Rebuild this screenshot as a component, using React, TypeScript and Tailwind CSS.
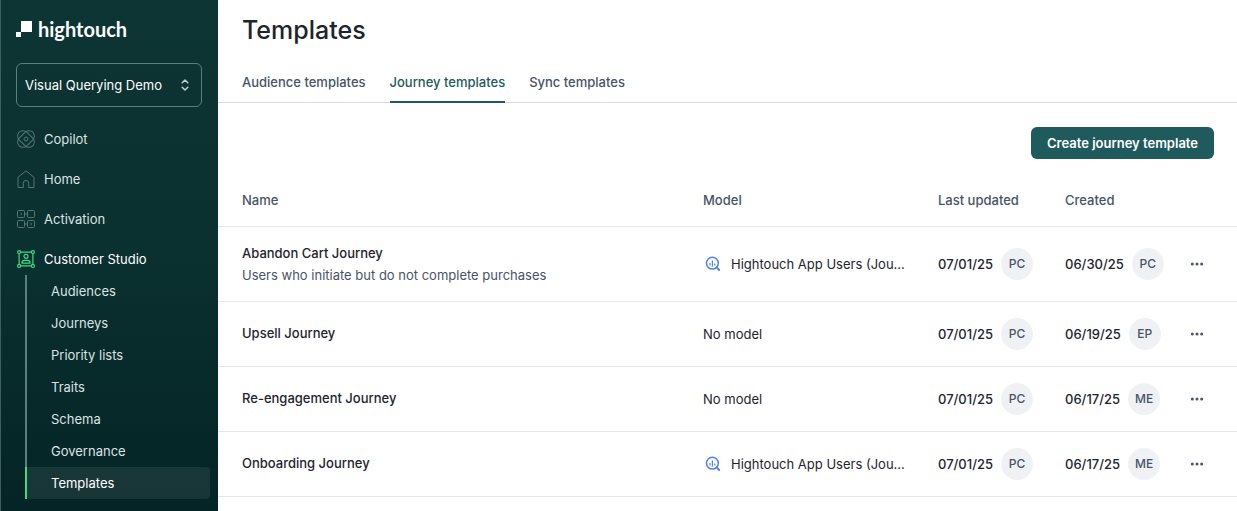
import clsx from "clsx";
import { Ellipsis } from "lucide-react";
import type { ReactNode } from "react";

type Template = {
  name: string;
  description?: string;
  model?: string;
  updated: string;
  updatedBy: string;
  created: string;
  createdBy: string;
};

const templates: Template[] = [
  {
    name: "Abandon Cart Journey",
    description: "Users who initiate but do not complete purchases",
    model: "Hightouch App Users (Jou...",
    updated: "07/01/25",
    updatedBy: "PC",
    created: "06/30/25",
    createdBy: "PC",
  },
  { name: "Upsell Journey", updated: "07/01/25", updatedBy: "PC", created: "06/19/25", createdBy: "EP" },
  { name: "Re-engagement Journey", updated: "07/01/25", updatedBy: "PC", created: "06/17/25", createdBy: "ME" },
  {
    name: "Onboarding Journey",
    model: "Hightouch App Users (Jou...",
    updated: "07/01/25",
    updatedBy: "PC",
    created: "06/17/25",
    createdBy: "ME",
  },
];

const studioLinks = ["Audiences", "Journeys", "Priority lists", "Traits", "Schema", "Governance", "Templates"];

function NavIcon({ children }: { children: ReactNode }) {
  return (
    <svg viewBox="0 0 18 18" className="size-[18px] shrink-0" fill="none" stroke="currentColor" aria-hidden="true">
      {children}
    </svg>
  );
}

function CopilotIcon() {
  return (
    <NavIcon>
      <rect x="-.6" y="3.6" width="19.2" height="10.8" rx="5.4" transform="rotate(45 9 9)" />
      <rect x="-.6" y="3.6" width="19.2" height="10.8" rx="5.4" transform="rotate(-45 9 9)" />
      <circle cx="9" cy="9" r="2" />
    </NavIcon>
  );
}

function HomeIcon() {
  return (
    <NavIcon>
      <path d="M1 7.3 9 .8l8 6.5v10.2h-5.3v-4.3a2.7 2.7 0 0 0-5.4 0v4.3H1z" strokeLinejoin="round" />
    </NavIcon>
  );
}

function ActivationIcon() {
  return (
    <NavIcon>
      <rect x=".5" y=".5" width="7" height="7" rx="1" />
      <rect x="10.5" y=".5" width="7" height="7" rx="1" />
      <rect x=".5" y="10.5" width="7" height="7" rx="1" />
      <rect x="10.5" y="10.5" width="7" height="7" rx="1" />
      <path d="M7.5 4h3M7.5 14h3M3.5 2.8 4.7 4 3.5 5.2M13.5 12.8l1.2 1.2-1.2 1.2" />
    </NavIcon>
  );
}

function StudioIcon() {
  return (
    <NavIcon>
      <path d="M3.6 2.1h10.8M3.6 15.9h10.8M2.1 3.6v10.8M15.9 3.6v10.8" strokeWidth="1.2" />
      <circle cx="2.1" cy="2.1" r="1.5" strokeWidth="1.2" />
      <circle cx="15.9" cy="2.1" r="1.5" strokeWidth="1.2" />
      <circle cx="2.1" cy="15.9" r="1.5" strokeWidth="1.2" />
      <circle cx="15.9" cy="15.9" r="1.5" strokeWidth="1.2" />
      <circle cx="9" cy="6.3" r="2" strokeWidth="1.2" />
      <path d="M5 13.2v-.7c0-1.4 1.2-2.2 2.6-2.2h2.8c1.4 0 2.6.8 2.6 2.2v.7z" strokeWidth="1.2" />
    </NavIcon>
  );
}

function ModelIcon() {
  return (
    <svg viewBox="0 0 16 16" className="size-4 shrink-0 text-[#4f85ec]" fill="none" stroke="currentColor" aria-hidden="true">
      <circle cx="7.4" cy="7.2" r="5.9" strokeWidth="1.5" />
      <path d="m11.6 11.4 2.6 2.6" strokeWidth="2" strokeLinecap="round" />
      <path d="M5 7v2.6M7.4 4.6v5.8M9.8 7.6v2" strokeWidth="1.2" />
    </svg>
  );
}

function NavItem({ icon, label, active = false }: { icon: ReactNode; label: string; active?: boolean }) {
  return (
    <a href="#" className={clsx("flex h-8 items-center gap-[9px]", active ? "text-white" : "text-[#dbe3e3]")}>
      <span className={active ? "text-[#3ddc84]" : "text-[#547776]"}>{icon}</span>
      {label}
    </a>
  );
}

function Sidebar() {
  return (
    <aside className="w-[218px] shrink-0 border-l border-[#3a5f5e] bg-linear-to-b from-[#0d3534] via-[#0a302f] to-[#052425] text-[13px] leading-5">
      <div className="flex h-[63px] items-start gap-1.5 pt-[17px] pl-[15px] text-white">
        <svg viewBox="0 0 16 16" className="mt-1 size-4" fill="currentColor" aria-hidden="true">
          <path d="M5 0h11v11H5zM0 11h5v5H0z" />
        </svg>
        <span className="font-[Lato,sans-serif] text-[20px] leading-6 font-bold">hightouch</span>
      </div>

      <div className="relative mr-4 ml-[15px]">
        <select
          aria-label="Workspace"
          className="h-11 w-full appearance-none rounded-md border border-[#5b7f7e] bg-transparent px-2 text-white"
        >
          <option>Visual Querying Demo</option>
        </select>
        <svg
          viewBox="0 0 8 12"
          className="pointer-events-none absolute top-4 right-[13px] h-3 w-2 text-[#c3d0d0]"
          fill="none"
          stroke="currentColor"
          strokeWidth="1.5"
          strokeLinecap="round"
          strokeLinejoin="round"
          aria-hidden="true"
        >
          <path d="m1.2 3.8 2.8-2.8 2.8 2.8M1.2 8.2l2.8 2.8 2.8-2.8" />
        </svg>
      </div>

      <nav className="mt-4 mr-2 ml-4 flex flex-col gap-2">
        <NavItem icon={<CopilotIcon />} label="Copilot" />
        <NavItem icon={<HomeIcon />} label="Home" />
        <NavItem icon={<ActivationIcon />} label="Activation" />
        <div>
          <NavItem icon={<StudioIcon />} label="Customer Studio" active />
          <ul className="ml-2">
            {studioLinks.map((link) => (
              <li key={link}>
                <a
                  href="#"
                  className={clsx(
                    "flex h-8 items-center border-l-2 pl-6",
                    link === "Templates"
                      ? "rounded-r border-[#3ddc84] bg-white/8 text-white"
                      : "border-[#5b7f7e] text-[#dbe3e3]",
                  )}
                >
                  {link}
                </a>
              </li>
            ))}
          </ul>
        </div>
      </nav>
    </aside>
  );
}

function DateCell({ date, initials }: { date: string; initials: string }) {
  return (
    <td>
      <div className="flex items-center gap-2 font-medium">
        {date}
        <span className="flex size-8 items-center justify-center rounded-full bg-[#f0f1f5] text-xs text-[#475467]">
          {initials}
        </span>
      </div>
    </td>
  );
}

function TemplatesTable() {
  return (
    <table className="mt-4 w-full table-fixed text-left text-[13px] leading-5">
      <thead>
        <tr className="h-[51px] border-b border-[#e0e6eb] text-[#475467] *:font-medium">
          <th className="pl-6">Name</th>
          <th className="w-[235px]">Model</th>
          <th className="w-[127px]">Last updated</th>
          <th className="w-[112px]">Created</th>
          <th className="w-[60px]" aria-label="Actions" />
        </tr>
      </thead>
      <tbody>
        {templates.map((template) => (
          <tr
            key={template.name}
            className={clsx("border-b border-[#e4e7ec]", template.description ? "h-[75px]" : "h-[65px]")}
          >
            <td className={clsx("pl-6", !template.description && "pb-px")}>
              <p className="leading-[22px] font-medium">{template.name}</p>
              {template.description && <p className="leading-[22px] text-[#475467]">{template.description}</p>}
            </td>
            <td className="pr-6">
              {template.model ? (
                <div className="ml-0.5 flex items-center gap-2.5">
                  <ModelIcon />
                  <span className="truncate">{template.model}</span>
                </div>
              ) : (
                "No model"
              )}
            </td>
            <DateCell date={template.updated} initials={template.updatedBy} />
            <DateCell date={template.created} initials={template.createdBy} />
            <td>
              <button type="button" aria-label="More actions" className="ml-2 flex size-6 items-center justify-center">
                <Ellipsis size={16} strokeWidth={2.5} className="text-[#475467]" />
              </button>
            </td>
          </tr>
        ))}
      </tbody>
    </table>
  );
}

export default function App() {
  return (
    <div className="flex min-h-screen bg-white font-[Inter,sans-serif] text-[#1d242e]">
      <Sidebar />
      <main className="min-w-0 flex-1">
        <h1 className="px-6 pt-3.5 text-[25px] leading-8 font-medium">Templates</h1>
        <nav className="mt-4 flex h-[41px] gap-6 border-b border-[#d4dbe3] px-6 text-[13px] leading-5 font-medium text-[#475467]">
          <a href="#" className="flex items-center">
            Audience templates
          </a>
          <a href="#" aria-current="page" className="-mb-px flex items-center border-b-2 border-[#1f5a5c] text-[#1f5a5c]">
            Journey templates
          </a>
          <a href="#" className="flex items-center">
            Sync templates
          </a>
        </nav>
        <div className="flex justify-end pt-6 pr-[23px]">
          <button
            type="button"
            className="h-8 rounded-md bg-[#1f5a5c] px-4 text-[13px] leading-5 font-semibold text-white"
          >
            Create journey template
          </button>
        </div>
        <TemplatesTable />
      </main>
    </div>
  );
}
